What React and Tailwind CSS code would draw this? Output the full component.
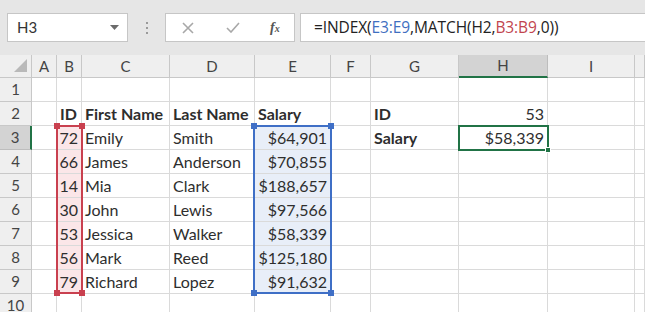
const cols = ["A", "B", "C", "D", "E", "F", "G", "H", "I", ""];

const people = [
  { id: 72, first: "Emily", last: "Smith", salary: "$64,901" },
  { id: 66, first: "James", last: "Anderson", salary: "$70,855" },
  { id: 14, first: "Mia", last: "Clark", salary: "$188,657" },
  { id: 30, first: "John", last: "Lewis", salary: "$97,566" },
  { id: 53, first: "Jessica", last: "Walker", salary: "$58,339" },
  { id: 56, first: "Mark", last: "Reed", salary: "$125,180" },
  { id: 79, first: "Richard", last: "Lopez", salary: "$91,632" },
];

const Cell = ({ children, className = "" }) => (
  <div
    className={`h-6 border-r border-b border-[#dadada] px-[3px] flex items-center overflow-visible whitespace-nowrap text-[16px] text-[#2e2e2e] ${className}`}
  >
    {children}
  </div>
);

const RowHead = ({ n, active }) => (
  <div
    className={`h-6 border-b border-r flex items-center justify-center text-[15px] text-[#444] ${
      active
        ? "bg-[#d3d3d3] border-r-2 border-r-[#217346] border-b-[#bdbdbd]"
        : "bg-[#efefef] border-[#c8c8c8]"
    }`}
  >
    {n}
  </div>
);

const Handle = ({ className }) => (
  <span className={`absolute w-[6px] h-[6px] ${className}`} />
);

const Toolbar = () => (
  <div className="h-[55px] bg-[#e6e6e6] flex items-start pt-[13px] pl-[7px]">
    <div className="w-[121px] h-[29px] bg-white border border-[#c6c6c6] flex items-center justify-between pl-[9px] pr-[8px] text-[15px] text-[#333]">
      <span>H3</span>
      <svg width="9" height="6" viewBox="0 0 9 6">
        <polygon points="0,0 9,0 4.5,5" fill="#6b6b6b" />
      </svg>
    </div>
    <div className="w-[37px] h-[29px] flex flex-col items-center justify-center gap-[3px]">
      <span className="w-[2px] h-[2px] bg-[#9a9a9a]" />
      <span className="w-[2px] h-[2px] bg-[#9a9a9a]" />
      <span className="w-[2px] h-[2px] bg-[#9a9a9a]" />
    </div>
    <div className="w-[130px] h-[29px] bg-white border border-[#c6c6c6] flex items-center">
      <svg className="ml-[16px]" width="12" height="12" viewBox="0 0 12 12">
        <path d="M1 1L11 11M11 1L1 11" stroke="#a8a8a8" strokeWidth="1.6" />
      </svg>
      <svg className="ml-[32px]" width="14" height="11" viewBox="0 0 14 11">
        <path d="M1 6L5 10L13 1" stroke="#a8a8a8" strokeWidth="1.6" fill="none" />
      </svg>
      <span className="ml-[30px] text-[14px] italic font-bold text-[#555] font-['Liberation_Serif',serif] leading-none">
        f<span className="text-[10px]">x</span>
      </span>
    </div>
    <div className="ml-[5px] flex-1 h-[29px] bg-white border border-[#c6c6c6] border-r-0 flex items-center pl-[13px] text-[15.5px] text-[#222] font-['Open_Sans',sans-serif] tracking-[-0.1px]">
      =INDEX(<span className="text-[#3f6fc0]">E3:E9</span>,MATCH(H2,
      <span className="text-[#c2454f]">B3:B9</span>,0))
    </div>
  </div>
);

export default function App() {
  return (
    <div className="w-[645px] h-[312px] overflow-hidden bg-white font-['Lato',sans-serif]">
      <Toolbar />
      <div className="relative">
        <div className="grid grid-cols-[32px_25px_25px_88px_85px_76px_40px_88px_89px_87px_1fr]">
          <div className="h-[23px] bg-[#efefef] border-r border-b border-[#c8c8c8] flex items-end justify-end pr-[4px] pb-[5px]">
            <svg width="13" height="13" viewBox="0 0 13 13">
              <polygon points="13,0 13,13 0,13" fill="#b9b9b9" />
            </svg>
          </div>
          {cols.map((c, i) => (
            <div
              key={i}
              className={`h-[23px] border-r flex items-center justify-center text-[15px] text-[#444] ${
                c === "H"
                  ? "bg-[#d3d3d3] border-b-2 border-b-[#217346] border-r-[#bdbdbd]"
                  : "bg-[#efefef] border-b border-[#c8c8c8]"
              }`}
            >
              {c}
            </div>
          ))}

          {/* row 1 */}
          <RowHead n={1} />
          {cols.map((_, i) => (
            <Cell key={i} />
          ))}

          {/* row 2 */}
          <RowHead n={2} />
          <Cell />
          <Cell className="font-bold">ID</Cell>
          <Cell className="font-bold">First Name</Cell>
          <Cell className="font-bold">Last Name</Cell>
          <Cell className="font-bold">Salary</Cell>
          <Cell />
          <Cell className="font-bold">ID</Cell>
          <Cell className="justify-end">53</Cell>
          <Cell />
          <Cell />

          {people.map((p, r) => (
            <div key={p.id} className="contents">
              <RowHead n={r + 3} active={r === 0} />
              <Cell />
              <Cell className="justify-end bg-[#fbe6e8]">{p.id}</Cell>
              <Cell>{p.first}</Cell>
              <Cell>{p.last}</Cell>
              <Cell className="justify-end bg-[#e8eef8]">{p.salary}</Cell>
              <Cell />
              <Cell className="font-bold">{r === 0 ? "Salary" : ""}</Cell>
              <Cell className="justify-end">{r === 0 ? "$58,339" : ""}</Cell>
              <Cell />
              <Cell />
            </div>
          ))}

          <RowHead n={10} />
          {cols.map((_, i) => (
            <Cell key={i} />
          ))}
        </div>

        {/* B3:B9 reference */}
        <div className="absolute left-[56px] top-[70px] w-[27px] h-[169px] border-2 border-[#c9404f]">
          <Handle className="-left-[4px] -top-[4px] bg-[#c9404f]" />
          <Handle className="-right-[4px] -top-[4px] bg-[#c9404f]" />
          <Handle className="-left-[4px] -bottom-[4px] bg-[#c9404f]" />
          <Handle className="-right-[4px] -bottom-[4px] bg-[#c9404f]" />
        </div>

        {/* E3:E9 reference */}
        <div className="absolute left-[253px] top-[70px] w-[79px] h-[169px] border-2 border-[#3f6fc6]">
          <Handle className="-left-[4px] -top-[4px] bg-[#3f6fc6]" />
          <Handle className="-right-[4px] -top-[4px] bg-[#3f6fc6]" />
          <Handle className="-left-[4px] -bottom-[4px] bg-[#3f6fc6]" />
          <Handle className="-right-[4px] -bottom-[4px] bg-[#3f6fc6]" />
        </div>

        {/* active cell H3 */}
        <div className="absolute left-[458px] top-[70px] w-[91px] h-[26px] border-2 border-[#217346]">
          <span className="absolute -right-[4px] -bottom-[4px] w-[6px] h-[6px] bg-[#217346] border border-white" />
        </div>
      </div>
    </div>
  );
}
